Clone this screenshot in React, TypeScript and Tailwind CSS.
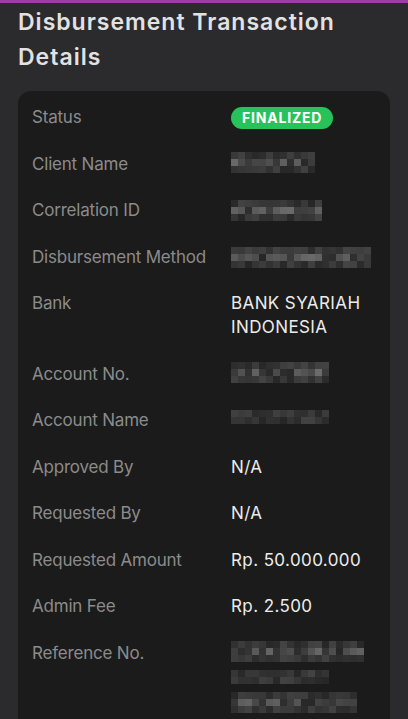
import React from "react";

function rand(seed: number) {
  let s = seed;
  return () => {
    s = (s * 9301 + 49297) % 233280;
    return s / 233280;
  };
}

function Blur({ cols, rows, seed, cell = 7 }: { cols: number[]; rows: number; seed: number; cell?: number }) {
  const r = rand(seed);
  return (
    <div className="flex flex-col">
      {Array.from({ length: rows }).map((_, ri) => (
        <div key={ri} className="flex">
          {Array.from({ length: cols[ri] ?? cols[0] }).map((_, ci) => {
            const edge = ri === 0 || ri === rows - 1;
            const v = Math.round(38 + r() * (edge ? 30 : 70));
            return (
              <div
                key={ci}
                style={{ width: cell, height: cell, backgroundColor: `rgb(${v},${v},${v})` }}
              />
            );
          })}
        </div>
      ))}
    </div>
  );
}

function Row({ label, children }: { label: string; children: React.ReactNode }) {
  return (
    <div className="flex">
      <div className="w-[199px] shrink-0 text-[17px] leading-6 tracking-[-0.2px] text-[#8b8b8b]">{label}</div>
      <div className="flex-1 text-[17px] leading-6 font-normal tracking-[0.4px] text-[#ececec]">{children}</div>
    </div>
  );
}

export default function App() {
  return (
    <div
      className="w-[408px] h-[719px] overflow-hidden bg-[#2b2a2d]"
      style={{ fontFamily: "Inter, 'Noto Sans', sans-serif" }}
    >
      <div className="h-[3px] bg-[#9b3fa2]" />
      <h1 className="px-[18px] pt-[2px] text-[23px] leading-[35px] font-semibold text-[#e2e2e2] tracking-[1px]">
        Disbursement Transaction Details
      </h1>
      <div className="mx-[18px] mt-[16px] rounded-[13px] bg-[#1b1b1b] pl-[14px] pt-[14px] pb-6 flex flex-col gap-[22.5px]">
        <Row label="Status">
          <span className="inline-flex h-[22px] items-center rounded-full bg-[#27c25a] px-[11px] text-[14px] font-bold tracking-[0.8px] text-white">
            FINALIZED
          </span>
        </Row>
        <Row label="Client Name">
          <div><Blur cols={[12]} rows={3} seed={11} /></div>
        </Row>
        <Row label="Correlation ID">
          <div className="pt-[2px]"><Blur cols={[13]} rows={3} seed={23} /></div>
        </Row>
        <Row label="Disbursement Method">
          <div className="pt-[2px]"><Blur cols={[20]} rows={3} seed={37} /></div>
        </Row>
        <Row label="Bank">
          BANK SYARIAH
          <br />
          INDONESIA
        </Row>
        <Row label="Account No.">
          <Blur cols={[14]} rows={3} seed={51} />
        </Row>
        <Row label="Account Name">
          <div className="pt-[2px]"><Blur cols={[14]} rows={2} seed={67} /></div>
        </Row>
        <Row label="Approved By">N/A</Row>
        <Row label="Requested By">N/A</Row>
        <Row label="Requested Amount">Rp. 50.000.000</Row>
        <Row label="Admin Fee">Rp. 2.500</Row>
        <Row label="Reference No.">
          <div className="flex flex-col gap-[8px]">
            <Blur cols={[19]} rows={3} seed={79} />
            <Blur cols={[14]} rows={2} seed={83} />
            <Blur cols={[18]} rows={3} seed={97} />
          </div>
        </Row>
      </div>
    </div>
  );
}
